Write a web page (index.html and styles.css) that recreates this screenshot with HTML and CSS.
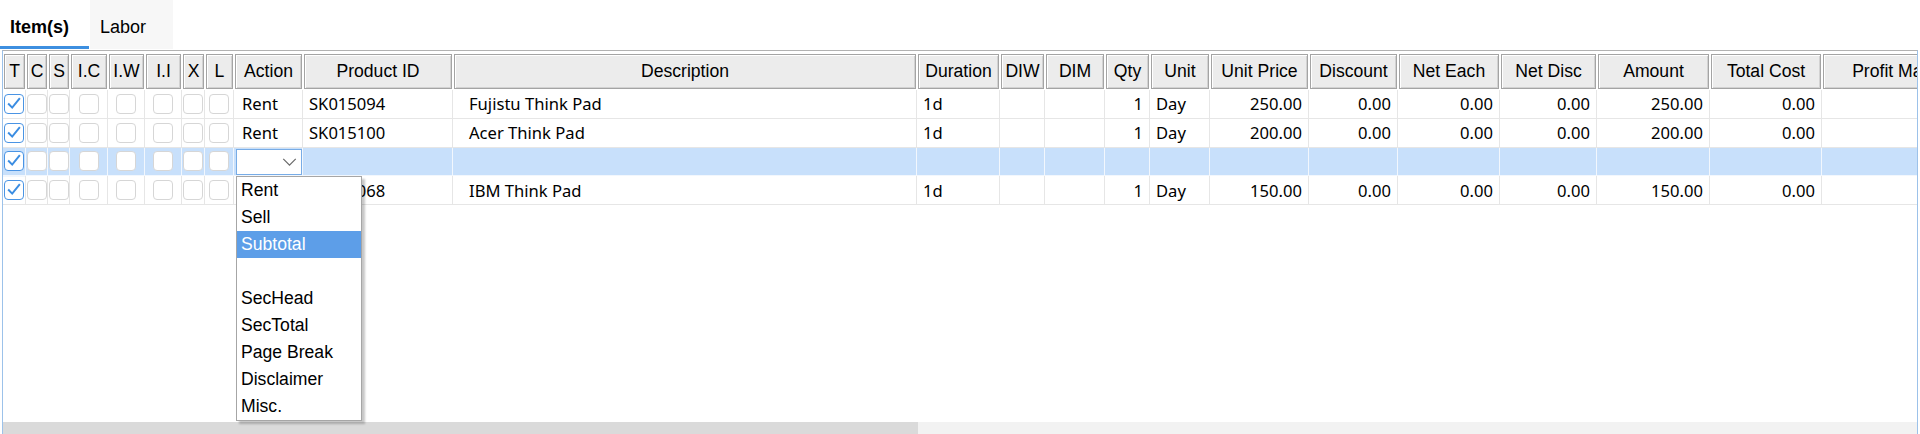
FILE: index.html
```html
<!DOCTYPE html>
<html lang="en">
<head>
    <meta charset="UTF-8">
    <title>Items</title>
    <link rel="stylesheet" href="styles.css">
</head>
<body>
    <div class="tabs">
        <div class="tab active">Item(s)</div>
        <div class="tab">Labor</div>
    </div>

    <div class="panel">
        <!-- header -->
        <div class="row head">
            <div class="hcell">T</div>
            <div class="hcell">C</div>
            <div class="hcell">S</div>
            <div class="hcell">I.C</div>
            <div class="hcell">I.W</div>
            <div class="hcell">I.I</div>
            <div class="hcell">X</div>
            <div class="hcell">L</div>
            <div class="hcell">Action</div>
            <div class="hcell">Product ID</div>
            <div class="hcell">Description</div>
            <div class="hcell">Duration</div>
            <div class="hcell">DIW</div>
            <div class="hcell">DIM</div>
            <div class="hcell">Qty</div>
            <div class="hcell">Unit</div>
            <div class="hcell">Unit Price</div>
            <div class="hcell">Discount</div>
            <div class="hcell">Net Each</div>
            <div class="hcell">Net Disc</div>
            <div class="hcell">Amount</div>
            <div class="hcell">Total Cost</div>
            <div class="hcell">Profit Margin</div>
        </div>

        <div class="body">
            <!-- row 1 -->
            <div class="row">
                <div class="cell chk"><span class="box on"><svg viewBox="0 0 20 20"><path d="M3.5 9.5 L8 14 L16.5 3.5"/></svg></span></div>
                <div class="cell chk"><span class="box"></span></div>
                <div class="cell chk"><span class="box"></span></div>
                <div class="cell chk"><span class="box"></span></div>
                <div class="cell chk"><span class="box"></span></div>
                <div class="cell chk"><span class="box"></span></div>
                <div class="cell chk"><span class="box"></span></div>
                <div class="cell chk"><span class="box"></span></div>
                <div class="cell action">Rent</div>
                <div class="cell">SK015094</div>
                <div class="cell desc">Fujistu Think Pad</div>
                <div class="cell">1d</div>
                <div class="cell"></div>
                <div class="cell"></div>
                <div class="cell num">1</div>
                <div class="cell">Day</div>
                <div class="cell num">250.00</div>
                <div class="cell num">0.00</div>
                <div class="cell num">0.00</div>
                <div class="cell num">0.00</div>
                <div class="cell num">250.00</div>
                <div class="cell num">0.00</div>
                <div class="cell"></div>
            </div>

            <!-- row 2 -->
            <div class="row">
                <div class="cell chk"><span class="box on"><svg viewBox="0 0 20 20"><path d="M3.5 9.5 L8 14 L16.5 3.5"/></svg></span></div>
                <div class="cell chk"><span class="box"></span></div>
                <div class="cell chk"><span class="box"></span></div>
                <div class="cell chk"><span class="box"></span></div>
                <div class="cell chk"><span class="box"></span></div>
                <div class="cell chk"><span class="box"></span></div>
                <div class="cell chk"><span class="box"></span></div>
                <div class="cell chk"><span class="box"></span></div>
                <div class="cell action">Rent</div>
                <div class="cell">SK015100</div>
                <div class="cell desc">Acer Think Pad</div>
                <div class="cell">1d</div>
                <div class="cell"></div>
                <div class="cell"></div>
                <div class="cell num">1</div>
                <div class="cell">Day</div>
                <div class="cell num">200.00</div>
                <div class="cell num">0.00</div>
                <div class="cell num">0.00</div>
                <div class="cell num">0.00</div>
                <div class="cell num">200.00</div>
                <div class="cell num">0.00</div>
                <div class="cell"></div>
            </div>

            <!-- row 3 (editing) -->
            <div class="row selected">
                <div class="cell chk"><span class="box on"><svg viewBox="0 0 20 20"><path d="M3.5 9.5 L8 14 L16.5 3.5"/></svg></span></div>
                <div class="cell chk"><span class="box"></span></div>
                <div class="cell chk"><span class="box"></span></div>
                <div class="cell chk"><span class="box"></span></div>
                <div class="cell chk"><span class="box"></span></div>
                <div class="cell chk"><span class="box"></span></div>
                <div class="cell chk"><span class="box"></span></div>
                <div class="cell chk"><span class="box"></span></div>
                <div class="cell edit">
                    <div class="combo">
                        <svg class="chevron" viewBox="0 0 16 9"><path d="M1 1 L8 8 L15 1"/></svg>
                        <div class="dropdown">
                            <div class="opt">Rent</div>
                            <div class="opt">Sell</div>
                            <div class="opt hl">Subtotal</div>
                            <div class="opt"></div>
                            <div class="opt">SecHead</div>
                            <div class="opt">SecTotal</div>
                            <div class="opt">Page Break</div>
                            <div class="opt">Disclaimer</div>
                            <div class="opt">Misc.</div>
                        </div>
                    </div>
                </div>
                <div class="cell"></div>
                <div class="cell"></div>
                <div class="cell"></div>
                <div class="cell"></div>
                <div class="cell"></div>
                <div class="cell"></div>
                <div class="cell"></div>
                <div class="cell"></div>
                <div class="cell"></div>
                <div class="cell"></div>
                <div class="cell"></div>
                <div class="cell"></div>
                <div class="cell"></div>
                <div class="cell"></div>
                <div class="cell"></div>
            </div>

            <!-- row 4 -->
            <div class="row">
                <div class="cell chk"><span class="box on"><svg viewBox="0 0 20 20"><path d="M3.5 9.5 L8 14 L16.5 3.5"/></svg></span></div>
                <div class="cell chk"><span class="box"></span></div>
                <div class="cell chk"><span class="box"></span></div>
                <div class="cell chk"><span class="box"></span></div>
                <div class="cell chk"><span class="box"></span></div>
                <div class="cell chk"><span class="box"></span></div>
                <div class="cell chk"><span class="box"></span></div>
                <div class="cell chk"><span class="box"></span></div>
                <div class="cell action">Rent</div>
                <div class="cell">SK015068</div>
                <div class="cell desc">IBM Think Pad</div>
                <div class="cell">1d</div>
                <div class="cell"></div>
                <div class="cell"></div>
                <div class="cell num">1</div>
                <div class="cell">Day</div>
                <div class="cell num">150.00</div>
                <div class="cell num">0.00</div>
                <div class="cell num">0.00</div>
                <div class="cell num">0.00</div>
                <div class="cell num">150.00</div>
                <div class="cell num">0.00</div>
                <div class="cell"></div>
            </div>
        </div>

        <div class="hscroll">
            <div class="thumb"></div>
        </div>
    </div>
</body>
</html>
```

FILE: styles.css
```css
body {
    margin: 0;
    background-color: white;
    font-family: "Noto Sans", sans-serif;
    color: #000;
}
.tabs {
    display: flex;
    height: 50px;
}
.tab {
    font-family: "Liberation Sans", Arial, sans-serif;
    font-size: 18px;
    padding: 17px 0 0 10px;
    box-sizing: border-box;
    height: 49px;
    background-color: #f7f7f7;
    width: 83px;
    margin-left: 1px;
}
.tab.active {
    font-weight: bold;
    background-color: white;
    width: 89px;
    margin-left: 0;
    border-bottom: 3px solid #3d8fe0;
}
.panel {
    --cols: 23px 22px 22px 38px 37px 37px 23px 29px 69px 150px 464px 83px 45px 60px 45px 60px 99px 89px 102px 97px 113px 112px 160px;
    margin-left: 2px;
    width: 1916px;
    height: 384px;
    box-sizing: border-box;
    border-top: 1px solid #b2b2b2;
    border-left: 1px solid #9cc2ea;
    border-right: 1px solid #9cc2ea;
    padding-top: 2px;
    display: flex;
    flex-direction: column;
    overflow: hidden;
}
.row {
    display: grid;
    grid-template-columns: var(--cols);
    width: max-content;
}
.head {
    height: 37px;
}
.hcell {
    margin: 1px;
    background-color: #ececec;
    border: 1px solid #a4a4a4;
    box-shadow: inset 1px 1px 0 #fff, inset -1px -1px 0 #d2d2d2;
    font-family: "Liberation Sans", Arial, sans-serif;
    font-size: 17.6px;
    display: flex;
    align-items: center;
    justify-content: center;
    white-space: nowrap;
    overflow: hidden;
}
.body {
    flex: 1;
}
.body .row {
    height: 28.75px;
}
.cell {
    border-right: 1px solid #e6e6e6;
    border-bottom: 1px solid #e6e6e6;
    font-size: 16.6px;
    display: flex;
    align-items: center;
    padding: 0 6px;
    white-space: nowrap;
    overflow: hidden;
    position: relative;
}
.cell.num {
    justify-content: flex-end;
}
.cell.action {
    padding-left: 8px;
}
.cell.desc {
    padding-left: 16px;
}
.cell.chk {
    padding: 0;
    justify-content: center;
}
.box {
    flex: none;
    width: 20px;
    height: 20px;
    box-sizing: border-box;
    border: 1px solid #d6d6d6;
    border-radius: 4px;
    background-color: white;
}
.box.on {
    border: 1px solid #4a94e4;
}
.box svg {
    display: block;
    width: 18px;
    height: 18px;
}
.box svg path {
    fill: none;
    stroke: #3b8de2;
    stroke-width: 2.2;
}
.selected .cell {
    background-color: #c8e0fb;
    border-right-color: #f2f7fd;
    border-bottom-color: #f2f7fd;
}
.cell.edit {
    padding: 0;
    overflow: visible;
    z-index: 2;
}
.combo {
    position: relative;
    margin: 1px 0 0 2px;
    width: 66px;
    height: 26px;
    box-sizing: border-box;
    border: 1px solid #78ace6;
    background-color: white;
    display: flex;
    align-items: center;
    justify-content: flex-end;
    padding-right: 4px;
}
.chevron {
    width: 15px;
    height: 8px;
}
.chevron path {
    fill: none;
    stroke: #6a6a6a;
    stroke-width: 1.4;
}
.dropdown {
    position: absolute;
    top: 26px;
    left: -1px;
    width: 126px;
    box-sizing: border-box;
    border: 1px solid #a6a6a6;
    background-color: white;
    box-shadow: 3px 3px 2px rgba(0,0,0,0.22);
    font-family: "Liberation Sans", Arial, sans-serif;
    font-size: 17.6px;
}
.opt {
    height: 27px;
    line-height: 27px;
    padding-left: 4px;
    white-space: nowrap;
}
.opt.hl {
    background-color: #5d9ee8;
    color: white;
}
.hscroll {
    height: 12px;
    background-color: #f2f2f2;
    flex: none;
}
.thumb {
    width: 915px;
    height: 100%;
    background-color: #dadada;
}
```
